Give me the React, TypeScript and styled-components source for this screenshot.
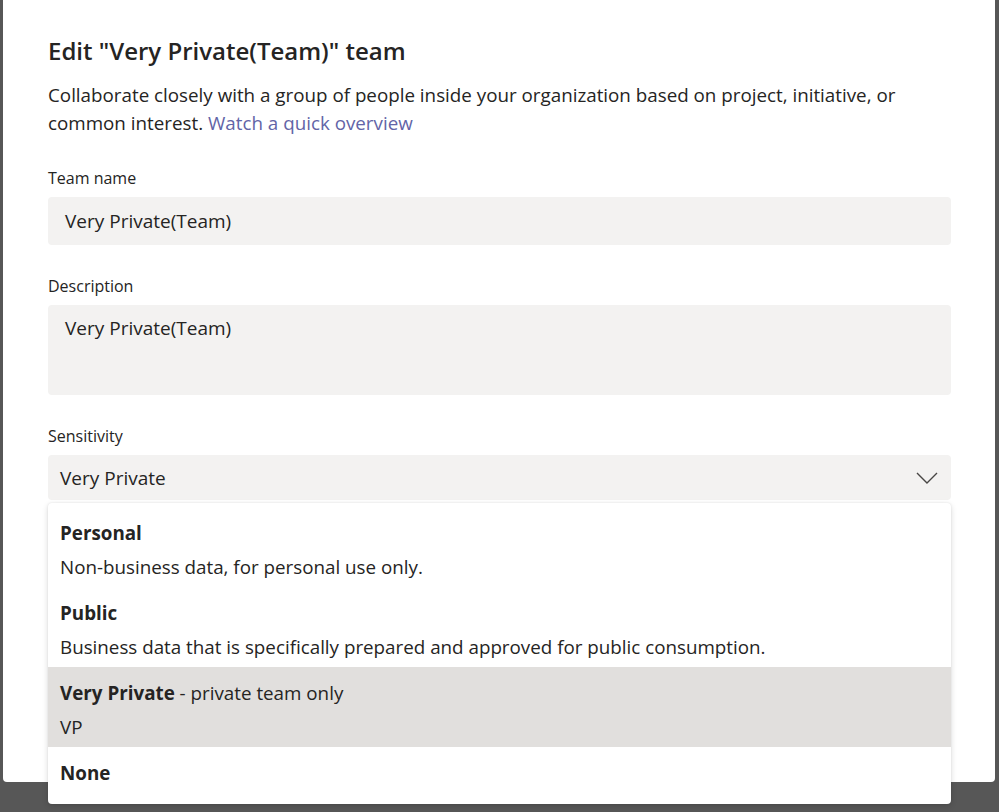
import React from "react";
import styled, { createGlobalStyle } from "styled-components";

const GlobalStyle = createGlobalStyle`
  html, body {
    margin: 0;
    padding: 0;
    background: #575757;
  }
  body {
    font-family: "Open Sans", "Noto Sans", sans-serif;
    color: #252423;
  }
`;

const options = [
  {
    title: "Personal",
    note: "",
    description: "Non-business data, for personal use only.",
  },
  {
    title: "Public",
    note: "",
    description:
      "Business data that is specifically prepared and approved for public consumption.",
  },
  {
    title: "Very Private",
    note: " - private team only",
    description: "VP",
    selected: true,
  },
  { title: "None", note: "", description: "" },
];

const App = () => {
  return (
    <>
      <GlobalStyle />
      <Page>
        <Dialog>
          <Title>Edit "Very Private(Team)" team</Title>
          <Intro>
            <span>
              Collaborate closely with a group of people inside your
              organization based on project, initiative, or
            </span>
            <br />
            <span>common interest.</span>{" "}
            <Link href="#">Watch a quick overview</Link>
          </Intro>

          <Field>
            <Label>Team name</Label>
            <Input>Very Private(Team)</Input>
          </Field>

          <Field>
            <Label>Description</Label>
            <TextArea>Very Private(Team)</TextArea>
          </Field>

          <Field>
            <Label>Sensitivity</Label>
            <SelectWrap>
              <Select>
                <span>Very Private</span>
                <svg width="22" height="12" viewBox="0 0 22 12" fill="none">
                  <path
                    d="M1 1l10 10L21 1"
                    stroke="#484644"
                    strokeWidth="1.4"
                  />
                </svg>
              </Select>
              <Menu>
                {options.map((o) => (
                  <Option key={o.title} selected={!!o.selected}>
                    <OptionTitle>
                      <strong>{o.title}</strong>
                      {o.note}
                    </OptionTitle>
                    {o.description && (
                      <OptionText>{o.description}</OptionText>
                    )}
                  </Option>
                ))}
              </Menu>
            </SelectWrap>
          </Field>
        </Dialog>
      </Page>
    </>
  );
};

const Page = styled.div`
  width: 999px;
  height: 812px;
  overflow: hidden;
  background: #575757;
`;

const Dialog = styled.div`
  margin-left: 3px;
  width: 992px;
  height: 782px;
  box-sizing: border-box;
  padding: 35px 44px 0 45px;
  background: #fff;
  border-radius: 0 0 4px 4px;
  display: flex;
  flex-direction: column;
`;

const Title = styled.h1`
  margin: 0;
  font-size: 24px;
  line-height: 32px;
  font-weight: 600;
`;

const Intro = styled.p`
  margin: 14px 0 0;
  font-size: 18.8px;
  line-height: 28px;
`;

const Link = styled.a`
  color: #6264a7;
  text-decoration: none;
`;

const Field = styled.div`
  margin-top: 31px;
  display: flex;
  flex-direction: column;
`;

const Label = styled.label`
  font-size: 16px;
  line-height: 20px;
  margin-bottom: 9px;
`;

const Input = styled.div`
  height: 48px;
  box-sizing: border-box;
  padding: 0 17px;
  display: flex;
  align-items: center;
  background: #f3f2f1;
  border-radius: 4px;
  font-size: 19px;
`;

const TextArea = styled.div`
  height: 90px;
  box-sizing: border-box;
  padding: 11px 17px;
  background: #f3f2f1;
  border-radius: 4px;
  font-size: 19px;
  line-height: 24px;
`;

const SelectWrap = styled.div`
  position: relative;
`;

const Select = styled.div`
  height: 45px;
  box-sizing: border-box;
  padding: 0 13px 0 12px;
  display: flex;
  align-items: center;
  justify-content: space-between;
  background: #f3f2f1;
  border-radius: 4px;
  font-size: 19px;
`;

const Menu = styled.div`
  position: absolute;
  top: 48px;
  left: 0;
  right: 0;
  height: 301px;
  box-sizing: border-box;
  padding-top: 4px;
  overflow: hidden;
  background: #fff;
  border-radius: 4px;
  box-shadow: 0 2px 6px rgba(0, 0, 0, 0.14), 0 0 2px rgba(0, 0, 0, 0.1);
`;

const Option = styled.div<{ selected: boolean }>`
  height: 80px;
  box-sizing: border-box;
  padding: 14px 12px 8px;
  background: ${(p) => (p.selected ? "#e1dfdd" : "transparent")};
  font-size: 18.8px;
`;

const OptionTitle = styled.div`
  line-height: 24px;
  strong {
    font-weight: 700;
  }
`;

const OptionText = styled.div`
  margin-top: 10px;
  line-height: 24px;
`;

export default App;
